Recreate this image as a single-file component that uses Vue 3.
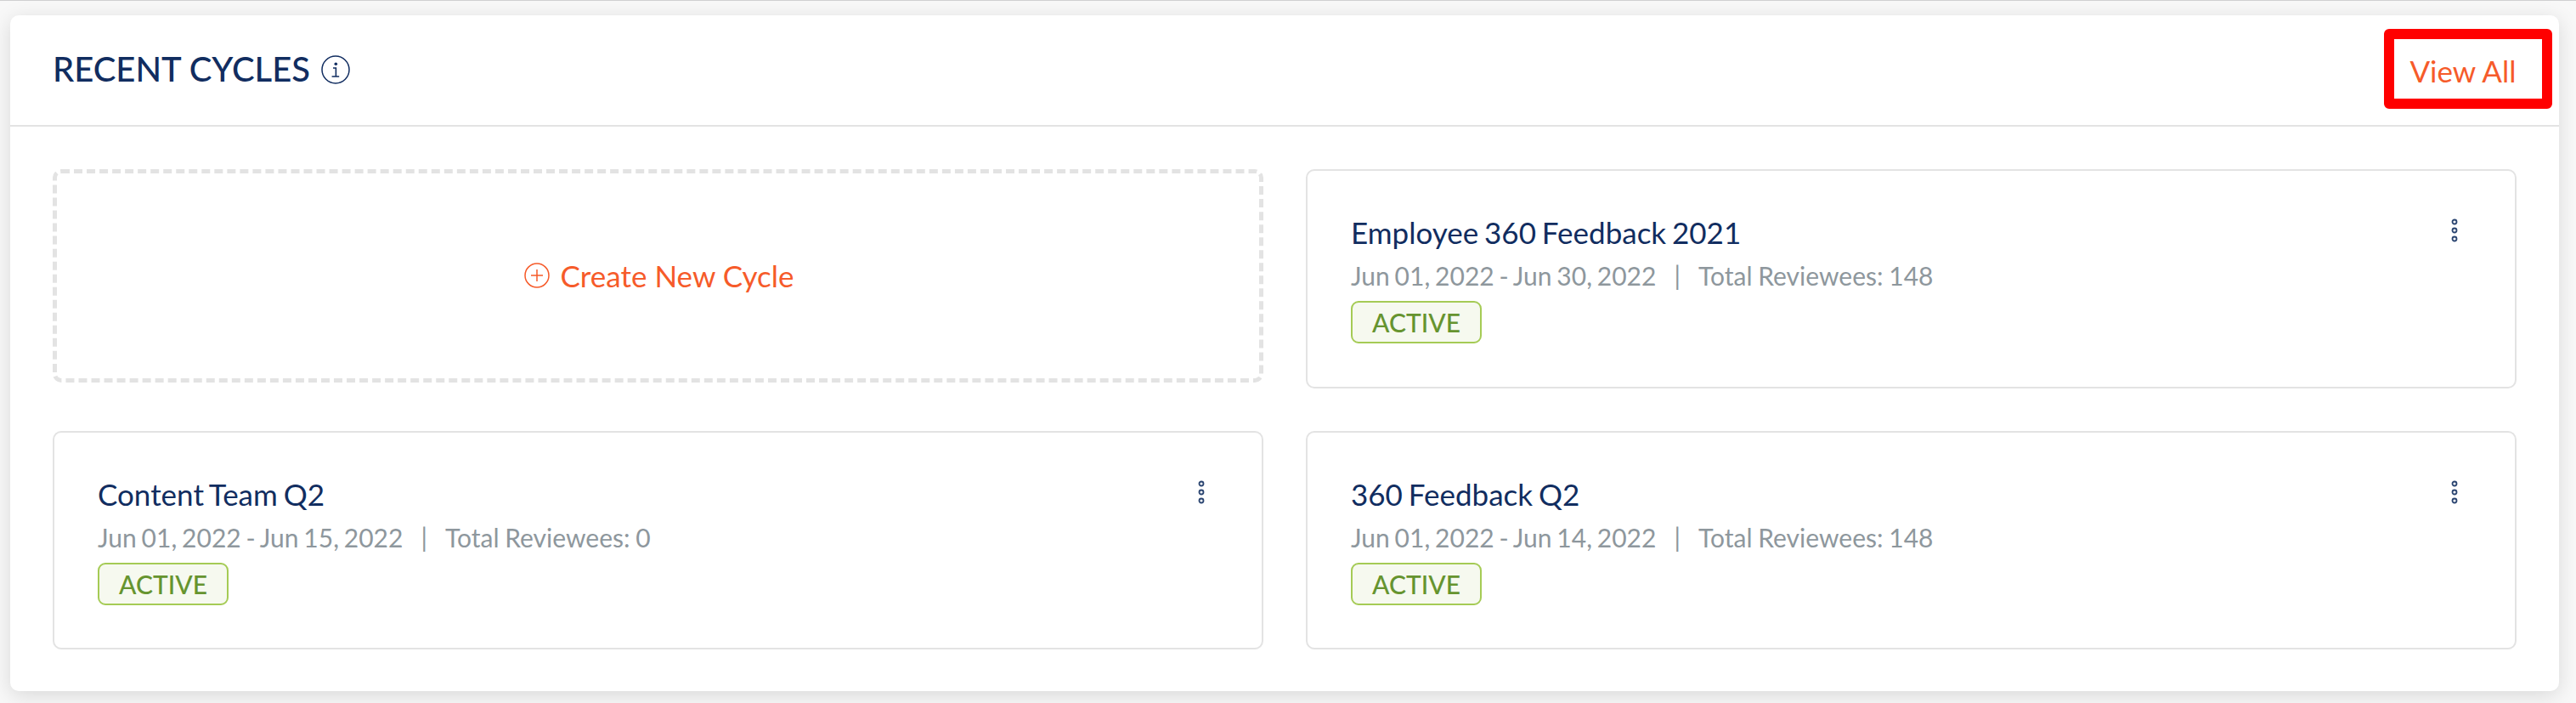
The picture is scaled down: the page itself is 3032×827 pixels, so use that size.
<script setup>
const cycles = [
  { name: 'Employee 360 Feedback 2021', dates: 'Jun 01, 2022 - Jun 30, 2022', total: 148 },
  { name: 'Content Team Q2', dates: 'Jun 01, 2022 - Jun 15, 2022', total: 0 },
  { name: '360 Feedback Q2', dates: 'Jun 01, 2022 - Jun 14, 2022', total: 148 },
]
</script>

<template>
  <main class="page">
    <section class="panel">
      <header class="head">
        <h1 class="title">RECENT CYCLES</h1>
        <svg class="info" width="34" height="34" viewBox="0 0 34 34" fill="none">
          <circle cx="17" cy="17" r="16" stroke="currentColor" stroke-width="1.5" />
          <circle cx="17.3" cy="10.3" r="1.8" fill="currentColor" />
          <path d="M14 15h3.4v10M12.6 25h8.6" stroke="currentColor" stroke-width="1.6" />
        </svg>
        <a class="view-all">View All</a>
        <span class="highlight"></span>
      </header>
      <div class="grid">
        <button class="create">
          <svg width="30" height="30" viewBox="0 0 30 30" fill="none" stroke="currentColor" stroke-width="1.5">
            <circle cx="15" cy="15" r="14" />
            <path d="M15 8v14M8 15h14" />
          </svg>
          <span class="create-label">Create New Cycle</span>
        </button>
        <article v-for="c in cycles" :key="c.name" class="card">
          <div class="body">
            <h2 class="name">{{ c.name }}</h2>
            <p class="meta">
              <span>{{ c.dates }}</span><span class="sep">|</span><span class="total">Total Reviewees: {{ c.total }}</span>
            </p>
            <span class="badge">ACTIVE</span>
          </div>
          <svg class="more" width="8" height="28" viewBox="0 0 8 28" fill="none" stroke="currentColor" stroke-width="1.8">
            <circle cx="4" cy="4" r="2.5" />
            <circle cx="4" cy="14" r="2.5" />
            <circle cx="4" cy="24" r="2.5" />
          </svg>
        </article>
      </div>
    </section>
  </main>
</template>

<style>
body {
  margin: 0;
  overflow: hidden;
}
</style>

<style scoped>
.page {
  box-sizing: border-box;
  height: 827px;
  padding: 17px 20px 0 12px;
  border-top: 1px solid #d0d0d1;
  background: #f8f8f8;
  font-family: Lato, "Liberation Sans", sans-serif;
  overflow: hidden;
}
.panel {
  box-sizing: border-box;
  height: 795.4px;
  background: #fff;
  border-radius: 10px;
  box-shadow: 0 5px 25px rgba(0, 0, 0, 0.13);
}
.head {
  position: relative;
  box-sizing: border-box;
  height: 130.5px;
  padding: 0 50.5px 2px 50px;
  border-bottom: 2px solid #e3e3e3;
  display: flex;
  align-items: center;
}
.title {
  margin: 0;
  font-size: 40px;
  line-height: 48px;
  font-weight: 500;
  color: #112d60;
}
.info {
  margin: 2px 0 0 13px;
  color: #112d60;
}
.view-all {
  margin-left: auto;
  padding-top: 3px;
  font-size: 35px;
  line-height: 42px;
  color: #f65b2a;
}
.highlight {
  position: absolute;
  box-sizing: border-box;
  top: 16px;
  right: 8px;
  width: 198px;
  height: 94px;
  border: 12px solid #f00;
  border-radius: 6px;
}
.grid {
  padding: 50px;
  display: grid;
  grid-template-columns: 1fr 1fr;
  grid-template-rows: 258px 257px;
  gap: 50px;
}
.create {
  box-sizing: border-box;
  height: 251px;
  padding: 0 0 0 2px;
  border: 5px dashed #e3e3e3;
  border-radius: 10px;
  background: none;
  display: flex;
  align-items: center;
  justify-content: center;
  gap: 13px;
  color: #f65b2a;
  font-family: inherit;
}
.create-label {
  font-size: 35px;
  line-height: 42px;
}
.card {
  box-sizing: border-box;
  padding: 51.4px 67px 0 51px;
  border: 2px solid #e3e3e3;
  border-radius: 10px;
  display: flex;
  justify-content: space-between;
  align-items: flex-start;
}
.body {
  display: flex;
  flex-direction: column;
  align-items: flex-start;
  gap: 11.8px;
}
.name {
  margin: 0;
  font-size: 35px;
  line-height: 42px;
  font-weight: 400;
  word-spacing: -0.06em;
  color: #112d60;
}
.meta {
  margin: 0;
  font-size: 30px;
  line-height: 37px;
  word-spacing: -0.06em;
  color: #8e979d;
  display: flex;
}
.sep {
  margin: 0 21px;
}
.total {
  word-spacing: -0.03em;
}
.badge {
  box-sizing: border-box;
  width: 154px;
  height: 50px;
  border: 2px solid #a5cb55;
  border-radius: 9px;
  background: #f6f9ef;
  color: #66942f;
  font-size: 30px;
  line-height: 47px;
  font-weight: 500;
  text-align: center;
}
.more {
  margin-top: 5px;
  color: #2a4470;
}
</style>
